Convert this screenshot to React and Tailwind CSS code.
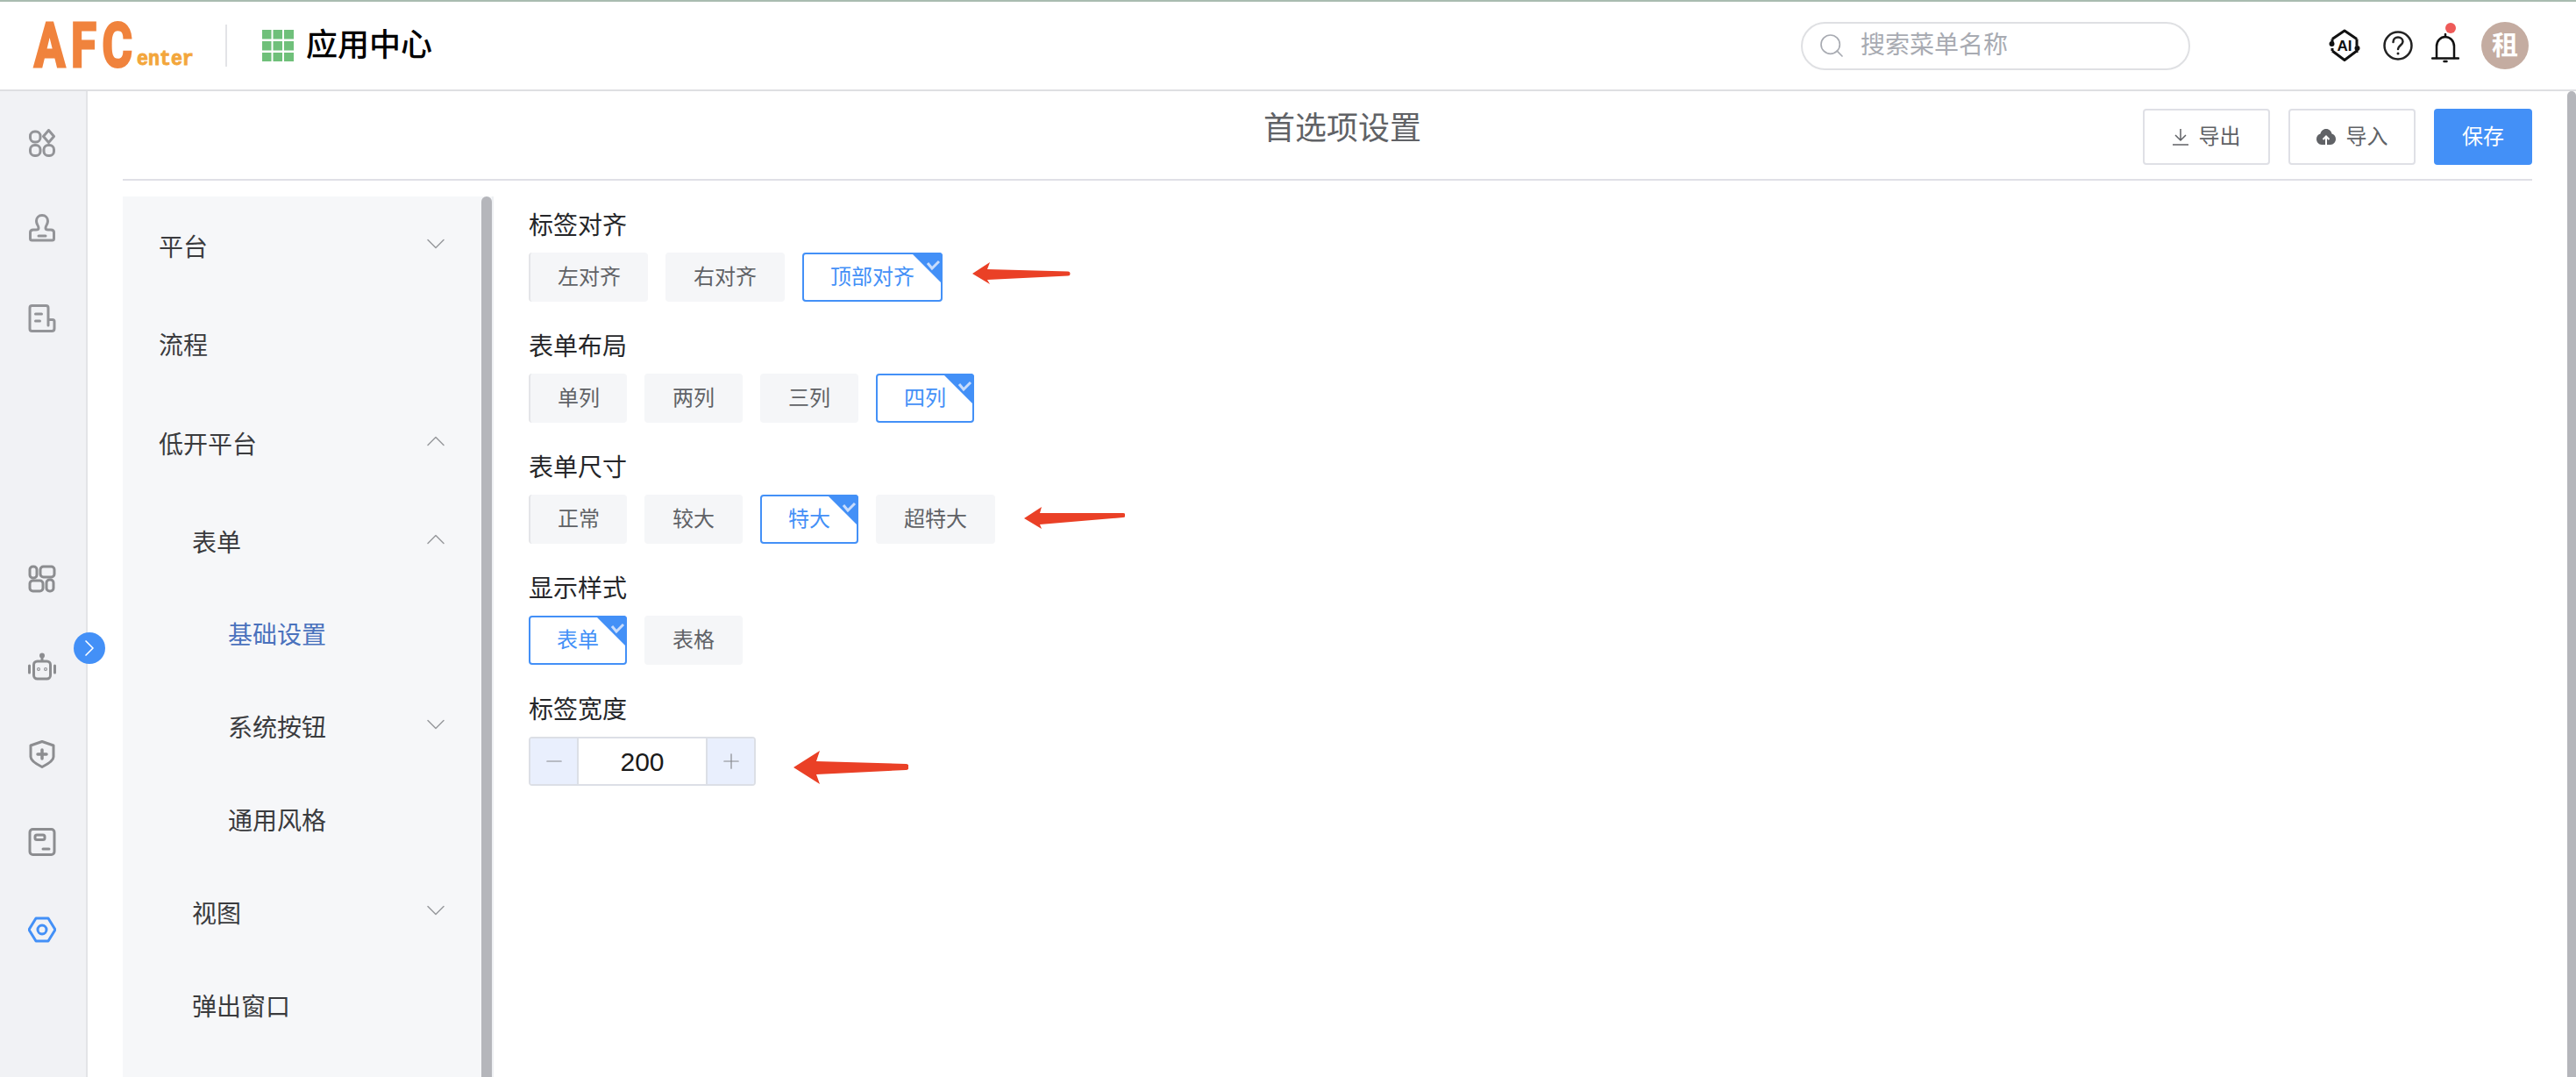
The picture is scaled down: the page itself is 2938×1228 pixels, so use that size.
import { ChevronDown, ChevronUp, ChevronRight, Minus, Plus, Search } from 'lucide-react';

const menuItems = [
    { label: '平台', indent: 'pl-[41px]', height: 'h-[112.5px]', chevron: 'down' },
    { label: '流程', indent: 'pl-[41px]', height: 'h-[112.5px]' },
    { label: '低开平台', indent: 'pl-[41px]', height: 'h-[112.5px]', chevron: 'up' },
    { label: '表单', indent: 'pl-[79px]', height: 'h-[112.5px] -mb-[4.5px]', chevron: 'up' },
    { label: '基础设置', indent: 'pl-[120px]', height: 'h-[106px]', active: true },
    { label: '系统按钮', indent: 'pl-[120px]', height: 'h-[106px]', chevron: 'down' },
    { label: '通用风格', indent: 'pl-[120px]', height: 'h-[106px]' },
    { label: '视图', indent: 'pl-[79px]', height: 'h-[106px]', chevron: 'down' },
    { label: '弹出窗口', indent: 'pl-[79px]', height: 'h-[106px]' },
];

const formGroups = [
    { label: '标签对齐', width: 'w-[136px]', wide: 'w-[160px]', options: ['左对齐', '右对齐', '顶部对齐'], selected: '顶部对齐' },
    { label: '表单布局', width: 'w-[112px]', options: ['单列', '两列', '三列', '四列'], selected: '四列' },
    { label: '表单尺寸', width: 'w-[112px]', wide: 'w-[136px]', options: ['正常', '较大', '特大', '超特大'], selected: '特大' },
    { label: '显示样式', width: 'w-[112px]', options: ['表单', '表格'], selected: '表单' },
];

function RailIcon({ children, color = 'text-[#939498]', className = '' }) {
    return (
        <div className={`h-[100px] flex items-center justify-center ${color}`}>
            <svg className={className} width="32" height="32" viewBox="0 0 32 32" fill="none" stroke="currentColor" strokeWidth="3" strokeLinejoin="round" strokeLinecap="round">
                {children}
            </svg>
        </div>
    );
}

function Rail() {
    return (
        <div className="relative w-[100px] shrink-0 bg-[#f1f2f5] border-r-2 border-[#e3e4e7] pt-[9px] pr-[2px]">
            <RailIcon>
                <rect x="2.5" y="3" width="11.5" height="12" rx="5" />
                <path d="M23.5 1.5l6 7-6 7-6-7z" />
                <rect x="2.5" y="18.5" width="11.5" height="12" rx="5" />
                <rect x="18" y="18.5" width="11.5" height="12" rx="5" />
            </RailIcon>
            <RailIcon className="-translate-y-[3px]">
                <path d="M16 1.500c-4 0-6.500 3-6.500 6.500 0 4 2.500 5 2.500 8 0 1.500-1 2-3 2H6c-2 0-3.500 1-3.500 3v7c0 1.500 1 2 2 2h23c1 0 2-.5 2-2v-7c0-2-1.500-3-3.500-3h-3c-2 0-3-.5-3-2 0-3 2.500-4 2.500-8 0-3.500-2.500-6.500-6.500-6.500z" />
                <path d="M12 25h8" />
            </RailIcon>
            <RailIcon>
                <path d="M23 24V4c0-1.500-1-2.500-2.500-2.500H4.500C3 1.500 2 2.500 2 4v24c0 1.500 1 2.500 2.500 2.500H27c1.500 0 3-1 3-3v-8c0-1-.5-2-2-2h-5" />
                <path d="M8.500 11h7M8.500 19h5" />
            </RailIcon>

            <div className="mt-[197px]">
                <RailIcon color="text-[#8c8d90]">
                    <rect x="2" y="2" width="8" height="13" rx="3.500" />
                    <rect x="14" y="2" width="16" height="12" rx="3.500" />
                    <rect x="2" y="18" width="15" height="12" rx="3.500" />
                    <rect x="21" y="17" width="8" height="13" rx="3.500" />
                </RailIcon>
                <RailIcon color="text-[#8c8d90]">
                    <circle cx="16" cy="3.500" r="1.500" fill="currentColor" />
                    <path d="M16 5v4" />
                    <rect x="6.500" y="10" width="19" height="20" rx="4" />
                    <path d="M1.500 15v8M30.500 15v8" />
                    <circle cx="12" cy="19" r="0.500" fill="currentColor" />
                    <circle cx="20" cy="19" r="0.500" fill="currentColor" />
                </RailIcon>
                <RailIcon color="text-[#8c8d90]">
                    <path d="M16 1.500l13 4.500v13c0 4-8 9-13 11.500C11 28 3 23 3 19V6z" />
                    <path d="M16 11v10M11 16h10" strokeWidth="3.500" />
                </RailIcon>
                <RailIcon color="text-[#8c8d90]">
                    <rect x="2" y="1.500" width="28" height="29" rx="3.500" />
                    <rect x="8" y="8" width="11" height="5.500" rx="2" />
                    <path d="M17 24h7" />
                </RailIcon>
                <RailIcon color="text-[#4390f7]">
                    <path d="M9 3h14l8 13-8 13H9L1 16z" />
                    <circle cx="16" cy="16" r="5" />
                </RailIcon>
            </div>

            <div className="absolute z-10 left-[84px] top-[617px] w-[36px] h-[36px] rounded-full bg-[#4390f7] flex items-center justify-center text-white">
                <ChevronRight size={32} strokeWidth={1.25} />
            </div>
        </div>
    );
}

function Header() {
    return (
        <div className="h-[102px] shrink-0 flex items-center bg-white border-b-2 border-[#dedfe2] pl-[39px] pr-[54px]">
            <div className="w-[184px] h-[50px] flex items-end leading-none">
                <span className="text-[70px] h-[50px] leading-[50px] font-bold text-[#f0833d] [-webkit-text-stroke:3px_#f0833d] font-['Roboto'] tracking-[9px] origin-left scale-x-[0.75] w-[117px]">AFC</span>
                <span className="text-[24px] leading-[18px] font-bold text-[#f3a63b] [-webkit-text-stroke:1px_#f3a63b] font-['Liberation_Mono'] origin-left scale-x-[0.9]">enter</span>
            </div>
            <div className="ml-[34px] w-[2px] h-[48px] bg-[#e3e4e7]" />
            <svg className="ml-[40px]" width="36" height="36" viewBox="0 0 36 36" fill="#6fc07a">
                <rect x="0" y="0" width="10.500" height="10.500" />
                <rect x="12.500" y="0" width="10.500" height="10.500" />
                <rect x="25" y="0" width="11" height="10.500" />
                <rect x="0" y="13" width="10.500" height="10.500" />
                <rect x="12.500" y="13" width="10.500" height="10.500" />
                <rect x="25" y="13" width="11" height="10.500" />
                <rect x="0" y="26" width="10.500" height="10" />
                <rect x="12.500" y="26" width="10.500" height="10" />
                <rect x="25" y="26" width="11" height="10" />
            </svg>
            <span className="ml-[14px] text-[36px] leading-[44px] font-medium text-black">应用中心</span>

            <div className="ml-auto w-[444px] h-[55px] rounded-full border-2 border-[#dfe0e3] flex items-center pl-[17px] text-[#a8abb2]">
                <Search size={32} strokeWidth={1.25} />
                <span className="ml-[17px] text-[28px] leading-[36px]">搜索菜单名称</span>
            </div>

            <svg className="ml-[157px]" width="38" height="38" viewBox="0 0 38 38" fill="none" stroke="#111" strokeWidth="3" strokeLinejoin="round">
                <path d="M5 11.500L19 2l14 9.500M33 25L19 35.500 5 25M5 11.500v5M33 27v-3M33 11.500v8M5 22v3" />
                <circle cx="4.500" cy="17" r="3" fill="#111" stroke="none" />
                <circle cx="33.500" cy="22" r="3" fill="#111" stroke="none" />
                <text x="19" y="25" textAnchor="middle" fontSize="17" fontWeight="700" fill="#111" stroke="none" fontFamily="Liberation Sans">AI</text>
            </svg>
            <svg className="ml-[25px]" width="34" height="34" viewBox="0 0 34 34" fill="none" stroke="#222" strokeWidth="2.500" strokeLinecap="round">
                <circle cx="17" cy="17" r="15.500" />
                <path d="M11.500 13c0-3.500 2.500-5.500 5.500-5.500s5.500 2 5.500 5c0 4-5.500 4.500-5.500 8.500" />
                <circle cx="17" cy="26" r="1.500" fill="#222" stroke="none" />
            </svg>
            <div className="relative ml-[21px] w-[32px] h-[34px] mt-[6px]">
                <svg width="32" height="34" viewBox="0 0 32 34" fill="none" stroke="#111" strokeWidth="2.500" strokeLinecap="round">
                    <path d="M6 28V15C6 8.500 10.500 4 16 4s10 4.500 10 11v13" />
                    <path d="M16 1v3" />
                    <path d="M1 28.500h30" />
                    <path d="M14.500 32h3" />
                </svg>
                <div className="absolute left-[16px] -top-[12px] w-[12px] h-[12px] rounded-full bg-[#ee5a58]" />
            </div>
            <div className="ml-[25px] w-[54px] h-[54px] rounded-full bg-[#c4aca1] flex items-center justify-center text-white text-[30px] leading-none font-bold">租</div>
        </div>
    );
}

function ToolbarButton({ icon, children }) {
    return (
        <button className="w-[145px] h-[64px] rounded-[4px] border-2 border-[#dfe0e6] bg-white text-[#606266] text-[24px] flex items-center justify-center gap-[12px]">
            {icon}
            {children}
        </button>
    );
}

function SideMenu() {
    return (
        <div className="w-[423px] shrink-0 flex bg-[#f6f7f9] h-[1004px] overflow-hidden">
            <div className="flex-1 pr-[43px] pt-[2.5px]">
                {menuItems.map((item) => (
                    <div key={item.label} className={`${item.height} ${item.indent} flex items-center justify-between`}>
                        <span className={`text-[28px] leading-[36px] ${item.active ? 'text-[#4a72bd]' : 'text-[#3a3b3e]'}`}>{item.label}</span>
                        {item.chevron === 'down' && <ChevronDown size={36} strokeWidth={1} className="text-[#98999d] mb-[10px] -mr-[9px]" />}
                        {item.chevron === 'up' && <ChevronUp size={36} strokeWidth={1} className="text-[#98999d] mb-[10px] -mr-[9px]" />}
                    </div>
                ))}
            </div>
            <div className="w-[12px] bg-[#b5b6bb] rounded-t-[6px]" />
            <div className="w-[2px] bg-[#eef0f3]" />
        </div>
    );
}

function OptionButton({ label, selected, width, first }) {
    if (selected) {
        return (
            <div className={`relative ${width} h-[56px] rounded-[4px] border-2 border-[#4390f7] bg-white text-[#4390f7] text-[24px] flex items-center justify-center`}>
                {label}
                <svg className="absolute -top-[2px] -right-[2px]" width="36" height="36" viewBox="0 0 36 36">
                    <path d="M0 0h32a4 4 0 0 1 4 4v32z" fill="#4390f7" />
                    <path d="M19 12l5 6 8-8" fill="none" stroke="#c9dcfb" strokeWidth="3" />
                </svg>
            </div>
        );
    }
    return (
        <div className={`${width} h-[56px] rounded-[4px] bg-[#f5f6f8] text-[#606266] text-[24px] flex items-center justify-center ${first ? 'border-l-2 border-[#e4e5e8]' : ''}`}>
            {label}
        </div>
    );
}

function OptionGroup({ group }) {
    return (
        <div className="h-[138px]">
            <div className="text-[28px] leading-[36px] text-[#252629]">{group.label}</div>
            <div className="flex gap-[20px] mt-[12px]">
                {group.options.map((option, index) => (
                    <OptionButton
                        key={option}
                        label={option}
                        first={index === 0}
                        selected={option === group.selected}
                        width={option.length > 2 && group.wide && (option.length === 4 || group.label === '表单尺寸') ? group.wide : group.width}
                    />
                ))}
            </div>
        </div>
    );
}

function NumberInput() {
    return (
        <div className="w-[259px] h-[56px] rounded-[4px] border-2 border-[#dcdfe6] flex mt-[12px] overflow-hidden">
            <div className="w-[55px] bg-[#e9effd] border-r-2 border-[#dcdfe6] flex items-center justify-center text-[#85878c]">
                <Minus size={28} strokeWidth={1} />
            </div>
            <div className="flex-1 flex items-center justify-center text-[30px] text-[#1a1a1a]">200</div>
            <div className="w-[55px] bg-[#e9effd] border-l-2 border-[#dcdfe6] flex items-center justify-center text-[#85878c]">
                <Plus size={28} strokeWidth={1} />
            </div>
        </div>
    );
}

export default function App() {
    return (
        <div className="relative w-[2938px] h-[1228px] overflow-hidden bg-white flex flex-col border-t-2 border-[#a9bcb0] font-['Liberation_Sans','Noto_Sans_CJK_SC',sans-serif]">
            <Header />
            <div className="flex flex-1 min-h-0">
                <Rail />
                <div className="flex-1 min-w-0 pl-[40px] pr-[40px]">
                    <div className="h-[102px] border-b-2 border-[#e0e0e6] flex items-start pt-[20px]">
                        <span className="ml-[1301px] mt-[1px] text-[36px] leading-[44px] text-[#606266]">首选项设置</span>
                        <div className="ml-auto flex gap-[21px]">
                            <ToolbarButton icon={
                                <svg width="18" height="20" viewBox="0 0 18 20" fill="none" stroke="#606266" strokeWidth="1.500">
                                    <path d="M9 1v13M3 8l6 6 6-6M0 19h18" />
                                </svg>
                            }>导出</ToolbarButton>
                            <ToolbarButton icon={
                                <svg width="22" height="18" viewBox="0 0 22 18">
                                    <path d="M11 0c3.500 0 6 2.500 6.500 5.500C20 6 22 8.500 22 11.500 22 15 19.500 18 16 18H6c-3.500 0-6-3-6-6.500C0 8.500 2 6 4.500 5.500 5 2.500 7.500 0 11 0z" fill="#606266" />
                                    <path d="M11 18v-9M7.500 12L11 8.500l3.500 3.500" stroke="#fff" strokeWidth="2" fill="none" />
                                </svg>
                            }>导入</ToolbarButton>
                            <button className="w-[112px] h-[64px] rounded-[4px] bg-[#4390f7] text-white text-[24px]">保存</button>
                        </div>
                    </div>
                    <div className="flex mt-[18px]">
                        <SideMenu />
                        <div className="ml-[40px] pt-[16px]">
                            {formGroups.map((group) => (
                                <OptionGroup key={group.label} group={group} />
                            ))}
                            <div className="text-[28px] leading-[36px] text-[#252629]">标签宽度</div>
                            <NumberInput />
                        </div>
                    </div>
                </div>
                <div className="w-[10px] bg-[#b5b6bb] rounded-t-[5px]" />
            </div>

            {/* Red annotation arrows drawn over the screenshot */}
            <svg className="absolute left-[1109px] top-[297px]" width="112" height="25" viewBox="0 0 112 25" fill="#ea4026">
                <path d="M0 13L20 0l-3 8 92 2.500a2.500 2.500 0 0 1 0 5L17 20l3 5z" />
            </svg>
            <svg className="absolute left-[1168px] top-[576px]" width="115" height="25" viewBox="0 0 115 25" fill="#ea4026">
                <path d="M0 13L20 0l-2 7 95 0a2.500 2.500 0 0 1 0 5L18 20l2 5z" />
            </svg>
            <svg className="absolute left-[905px] top-[854px]" width="131" height="38" viewBox="0 0 131 38" fill="#ea4026">
                <path d="M0 19L30 0l-4 12 102 3a3.500 3.500 0 0 1 0 7L26 27l4 11z" />
            </svg>
        </div>
    );
}
